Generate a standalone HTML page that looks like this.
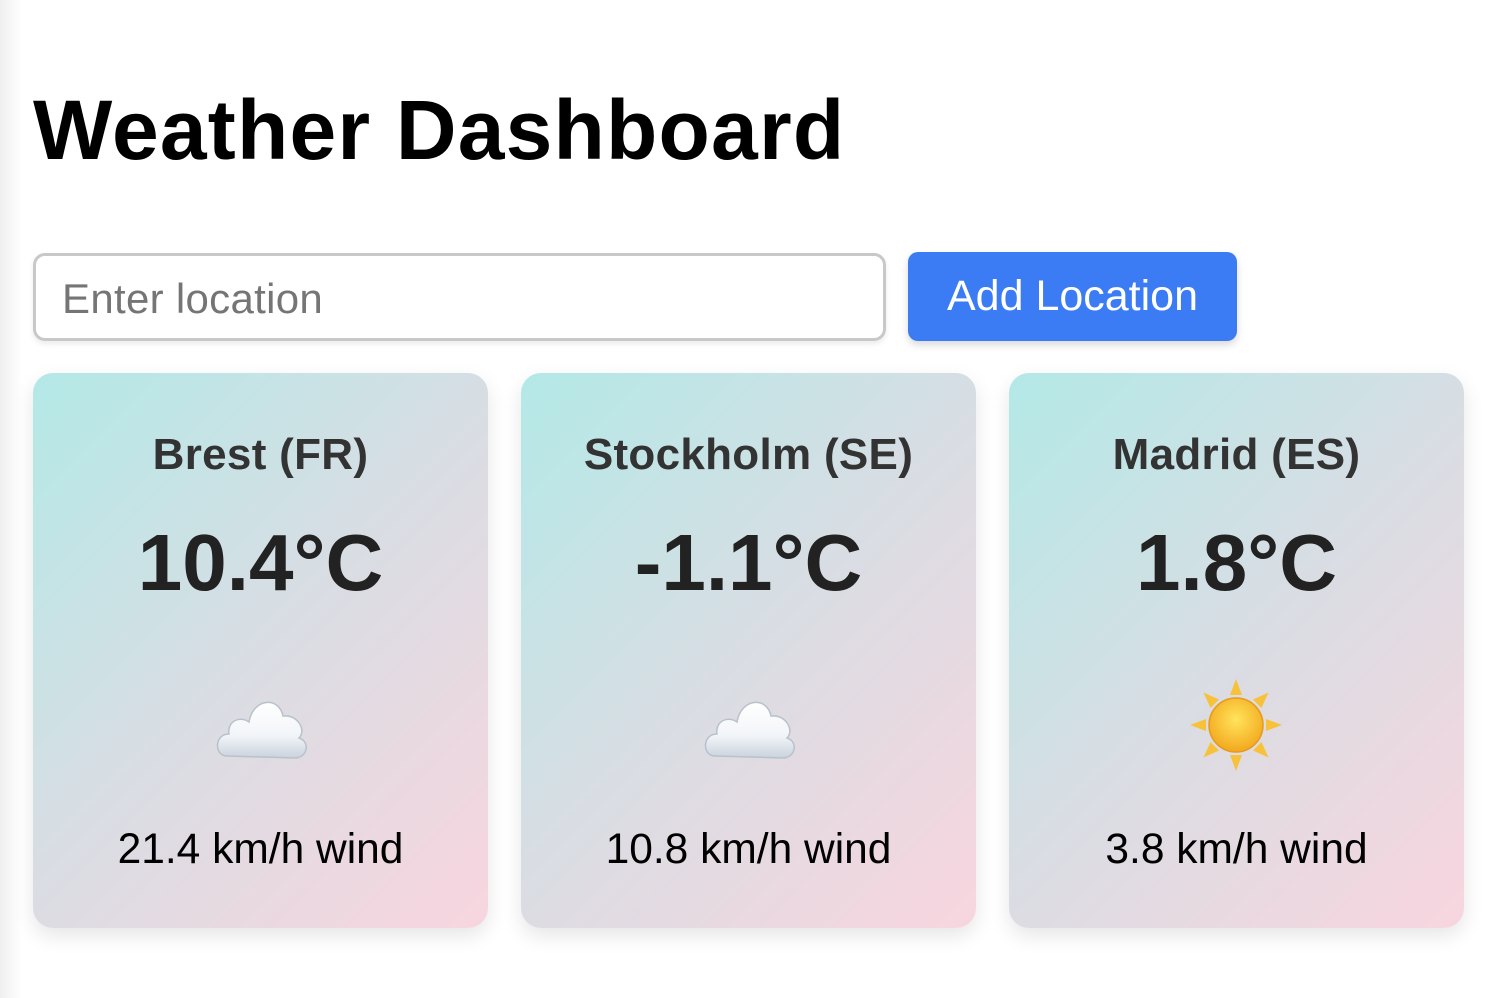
<!DOCTYPE html>
<html><head><style>
body{margin:0;width:1512px;height:998px;background:#fff;font-family:"Liberation Sans",Arial,sans-serif;position:relative;overflow:hidden}
.edge{position:absolute;left:0;top:0;width:22px;height:998px;background:linear-gradient(90deg,#efefef,#fff)}
h1{position:absolute;left:33px;top:82px;margin:0;font-size:84px;font-weight:bold;color:#000;letter-spacing:1.2px}
.inp{position:absolute;left:33px;top:253px;width:847px;height:82px;border:3px solid #c8c8c8;border-radius:12px;box-sizing:content-box;box-shadow:0 3px 6px rgba(0,0,0,.08)}
.inp span{position:absolute;left:26px;top:19px;font-size:42px;color:#757575;letter-spacing:.3px}
.btn{position:absolute;left:908px;top:252px;width:329px;height:89px;background:#3b7cf5;border-radius:10px;color:#fff;font-size:43px;text-align:center;line-height:89px;box-shadow:0 4px 8px rgba(0,0,0,.15)}
.card{position:absolute;top:373px;width:455px;height:555px;border-radius:20px;background:linear-gradient(135deg,#b3e9e7 0%,#d9dde3 50%,#f8d5df 100%);box-shadow:0 8px 20px rgba(0,0,0,.1);text-align:center}
.city{position:absolute;top:57px;width:100%;font-size:44px;font-weight:bold;color:#333;letter-spacing:.3px}
.temp{position:absolute;top:144px;width:100%;font-size:80px;font-weight:bold;color:#222}
.ic{position:absolute;top:305px;left:180px}
.wind{position:absolute;top:453px;width:100%;font-size:42.5px;color:#000}
</style></head><body>
<div class="edge"></div>
<h1>Weather Dashboard</h1>
<div class="inp"><span>Enter location</span></div>
<div class="btn">Add Location</div>

<div class="card" style="left:33px"><div class="city">Brest (FR)</div><div class="temp">10.4°C</div>
<svg class="ic" width="96" height="96" viewBox="0 0 96 96"><defs><linearGradient id="c" x1="0" y1="0" x2="0" y2="1"><stop offset="0" stop-color="#fff"/><stop offset=".6" stop-color="#f2f5f8"/><stop offset="1" stop-color="#c9d2dc"/></linearGradient></defs><path d="M14 78 C1 78 1 56 16 56 C14 42 28 38 36 44 C40 20 66 18 70 38 C84 36 94 52 86 60 C98 64 94 80 82 80 Z" fill="url(#c)" stroke="#b8c2cc" stroke-width="1.5"/></svg>
<div class="wind">21.4 km/h wind</div></div>

<div class="card" style="left:521px"><div class="city">Stockholm (SE)</div><div class="temp">-1.1°C</div>
<svg class="ic" width="96" height="96" viewBox="0 0 96 96"><path d="M14 78 C1 78 1 56 16 56 C14 42 28 38 36 44 C40 20 66 18 70 38 C84 36 94 52 86 60 C98 64 94 80 82 80 Z" fill="url(#c)" stroke="#b8c2cc" stroke-width="1.5"/></svg>
<div class="wind">10.8 km/h wind</div></div>

<div class="card" style="left:1009px"><div class="city">Madrid (ES)</div><div class="temp">1.8°C</div>
<svg class="ic" width="96" height="96" viewBox="0 0 96 96" style="top:306px;left:180px"><defs><radialGradient id="s" cx=".5" cy=".4" r=".6"><stop offset="0" stop-color="#ffe45c"/><stop offset="1" stop-color="#f3a81e"/></radialGradient></defs>
<g fill="#f7c23a" transform="translate(47 46)">
<polygon points="-6,-30 6,-30 0,-46"/><polygon points="-6,30 6,30 0,46"/><polygon points="-30,-6 -30,6 -46,0"/><polygon points="30,-6 30,6 46,0"/>
<g transform="rotate(45)"><polygon points="-6,-30 6,-30 0,-46"/><polygon points="-6,30 6,30 0,46"/><polygon points="-30,-6 -30,6 -46,0"/><polygon points="30,-6 30,6 46,0"/></g></g>
<circle cx="47" cy="46" r="27" fill="url(#s)" stroke="#e59b1c" stroke-width="1.5"/></svg>
<div class="wind">3.8 km/h wind</div></div>
</body></html>
